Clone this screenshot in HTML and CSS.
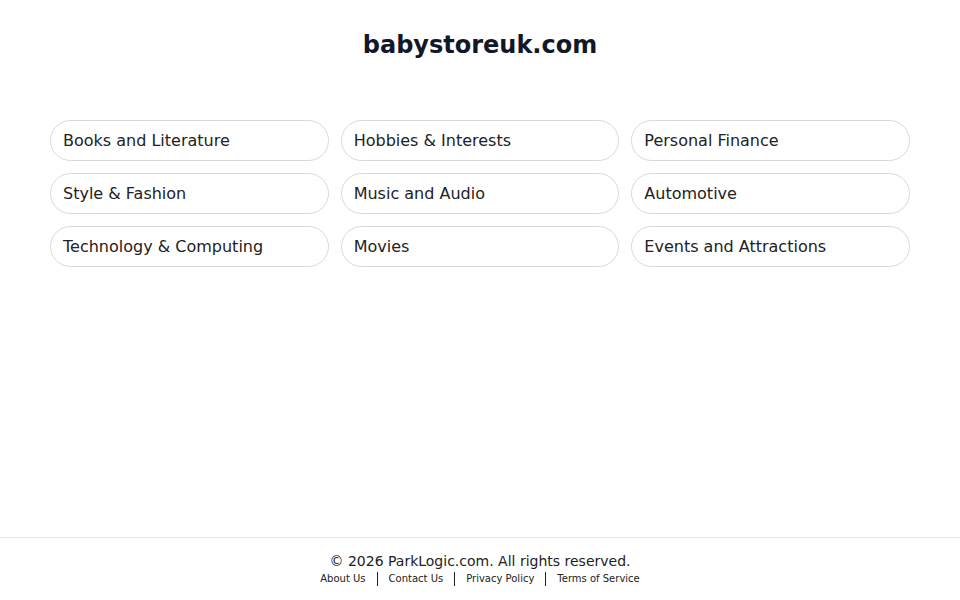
FILE: index.html
```html
<!DOCTYPE html>
<html lang="en">
<head>
    <meta charset="UTF-8">
    <meta name="viewport" content="width=device-width, initial-scale=1.0">
    <title>babystoreuk.com</title>
    <link rel="stylesheet" href="styles.css">
</head>
<body>
    <!-- Header -->
    <h1 class="site-title">babystoreuk.com</h1>

    <!-- Categories -->
    <main class="content">
        <div class="categories">
            <a class="category" href="#">Books and Literature</a>
            <a class="category" href="#">Hobbies &amp; Interests</a>
            <a class="category" href="#">Personal Finance</a>
            <a class="category" href="#">Style &amp; Fashion</a>
            <a class="category" href="#">Music and Audio</a>
            <a class="category" href="#">Automotive</a>
            <a class="category" href="#">Technology &amp; Computing</a>
            <a class="category" href="#">Movies</a>
            <a class="category" href="#">Events and Attractions</a>
        </div>
    </main>

    <!-- Footer -->
    <footer class="footer">
        <div class="copyright">&copy; 2026 ParkLogic.com. All rights reserved.</div>
        <div class="footer-links">
            <a href="#">About Us</a>
            <span class="sep"></span>
            <a href="#">Contact Us</a>
            <span class="sep"></span>
            <a href="#">Privacy Policy</a>
            <span class="sep"></span>
            <a href="#">Terms of Service</a>
        </div>
    </footer>
</body>
</html>
```

FILE: styles.css
```css
body {
    font-family: "DejaVu Sans", Verdana, sans-serif;
    margin: 0;
    padding: 0;
    min-height: 100vh;
    display: flex;
    flex-direction: column;
    background-color: #fff;
    color: #222;
}

.site-title {
    margin: 0;
    padding-top: 31px;
    text-align: center;
    font-size: 24px;
    line-height: 28px;
    font-weight: bold;
    color: #111827;
}

.content {
    flex: 1;
    padding: 61px 50px 0;
}

.categories {
    display: grid;
    grid-template-columns: repeat(3, 1fr);
    gap: 12px;
}

.category {
    display: flex;
    align-items: center;
    height: 39px;
    padding: 0 12px;
    border: 1px solid #d9d9d9;
    border-radius: 21px;
    font-size: 16px;
    color: #222;
    text-decoration: none;
}

.category:hover {
    background-color: #f7f7f7;
}

/* Footer */
.footer {
    border-top: 1px solid #e5e5e5;
    padding: 15px 0 14px;
    text-align: center;
}

.copyright {
    font-size: 14px;
    line-height: 17px;
    color: #222;
}

.footer-links {
    display: flex;
    justify-content: center;
    align-items: center;
    margin-top: 2px;
    font-size: 10px;
    line-height: 14px;
}

.footer-links a {
    color: #222;
    text-decoration: none;
}

.sep {
    display: inline-block;
    width: 1px;
    height: 14px;
    margin: 0 11px;
    background-color: #222;
}
```
